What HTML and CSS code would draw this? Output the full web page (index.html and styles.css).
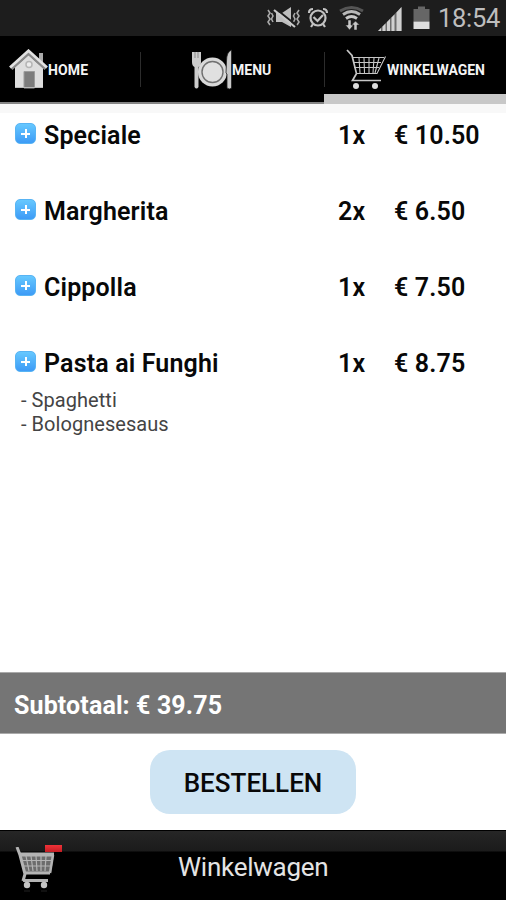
FILE: index.html
```html
<!DOCTYPE html>
<html lang="nl">
<head>
<meta charset="utf-8">
<title>Winkelwagen</title>
<link rel="stylesheet" href="styles.css">
</head>
<body>
<div class="app">
  <header class="status">
    <svg class="status-icons" width="176" height="36" viewBox="0 0 176 36" aria-hidden="true">
      <g fill="none" stroke="#a8a8a8" stroke-width="1.6">
        <path d="M12 10l2 3-2 3 2 3-2 3 2 3M15.500 13l1.500 3-1.500 3 1.500 3M43 10l-2 3 2 3-2 3 2 3-2 3M39 13l-1.500 3 1.500 3-1.500 3"/>
      </g>
      <path d="M20 13h6l9-6v20l-9-5h-6z" fill="#bdbdbd"/>
      <path d="M20 9l20 16" stroke="#1d1d1d" stroke-width="2"/>
      <path d="M18 10l21 17" stroke="#c8c8c8" stroke-width="2.200"/>
      <g fill="none" stroke="#c2c2c2" stroke-width="2.200">
        <circle cx="62" cy="18" r="7.500"/>
        <path d="M57.500 17l4 4 5.500-6M53 13c0-3 2-4 4-4M71 13c0-3-2-4-4-4M57 24l-2 3M67 24l2 3"/>
      </g>
      <g fill="none" stroke-width="2.800">
        <path d="M84 11q11.500-7 23 0" stroke="#555"/>
        <path d="M87 14.500q8.500-6 17 0" stroke="#b8b8b8"/>
        <path d="M90 18.500q5.500-4 11 0" stroke="#c8c8c8"/>
      </g>
      <path d="M92 20h3v5h2.500l-4 5-4-5h2.500zM98 30v-5h-2.500l4-4 4 4H101v5z" fill="#c8c8c8" stroke="#1d1d1d" stroke-width=".5"/>
      <path d="M122 31l23.500-24v24z" fill="#6c6c6c"/>
      <path d="M122 31l3-3v3zM126.500 31v-4.500l3-3V31zM131 31v-9l3-3v12zM135.500 31V17.500l3-3V31zM140.500 31V12.500l5-5.500v24z" fill="#d0d0d0"/>
      <path d="M157.500 9h4.500V6.500h7V9h4.500v12.500h-16z" fill="#666"/>
      <path d="M157.500 21.500h16V29h-16z" fill="#dedede"/>
    </svg>
    <time class="clock">18:54</time>
  </header>

  <nav class="tabs">
    <a class="tab tab-home">
      <svg width="39" height="42" viewBox="0 0 39 42" aria-hidden="true">
        <path d="M30 4h4v13h-4z" fill="#aaa"/>
        <path d="M6 18L19.500 6 34 19v20H6z" fill="#dedede"/>
        <path d="M2.500 20L19.500 4.500 36.500 20" fill="none" stroke="#8a8a8a" stroke-width="3"/>
        <path d="M1 18.500L19.500 1.800 38 18.500" fill="none" stroke="#e2e2e2" stroke-width="2.800"/>
        <circle cx="20" cy="15.500" r="3" fill="#ececec" stroke="#b5b5b5" stroke-width="1.500"/>
        <path d="M15 22.500h10.500V39H15z" fill="#7c7c7c" stroke="#9b9b9b"/>
        <path d="M6 38.500h28" stroke="#bbb"/>
      </svg>
      <span>HOME</span>
    </a>
    <a class="tab tab-menu">
      <svg width="42" height="42" viewBox="0 0 42 42" aria-hidden="true">
        <path d="M1 3h9v10q0 4-2.500 5v20q-2 3-4 0V18Q1 17 1 13z" fill="#ccc"/>
        <path d="M4 3v6M7 3v6" stroke="#888"/>
        <circle cx="21.500" cy="23" r="14.500" fill="#d8d8d8"/>
        <circle cx="21.500" cy="23" r="10.500" fill="#e0e0e0" stroke="#707070" stroke-width="1.400"/>
        <path d="M35.500 12q0-9 5-11v38q-2 2-4.500 0V25l-1-1z" fill="#c9c9c9" stroke="#222" stroke-width=".8"/>
      </svg>
      <span>MENU</span>
    </a>
    <a class="tab tab-cart active">
      <svg width="41" height="42" viewBox="0 0 41 42" aria-hidden="true">
        <g fill="none" stroke="#c6c6c6">
          <path d="M1 1l5 5.500 4.500 18-4 7H35" stroke-width="1.700"/>
          <path d="M6 8.500h32M7 13.500h28M8 18.500h25M10 24.500h21L39.500 7.500M13 9l1 15M18 9l.5 15M23 9v15M28 9l-1 15M33 9l-4 15" stroke-width="1.100"/>
        </g>
        <circle cx="10" cy="37" r="3" fill="#ddd"/>
        <circle cx="29" cy="37" r="3" fill="#ddd"/>
      </svg>
      <span>WINKELWAGEN</span>
    </a>
  </nav>

  <main class="list">
    <section class="item">
      <i class="plus"></i><b class="name">Speciale</b><b class="qty">1x</b><b class="price">€ 10.50</b>
    </section>
    <section class="item">
      <i class="plus"></i><b class="name">Margherita</b><b class="qty">2x</b><b class="price">€ 6.50</b>
    </section>
    <section class="item">
      <i class="plus"></i><b class="name">Cippolla</b><b class="qty">1x</b><b class="price">€ 7.50</b>
    </section>
    <section class="item">
      <i class="plus"></i><b class="name">Pasta ai Funghi</b><b class="qty">1x</b><b class="price">€ 8.75</b>
    </section>
    <div class="extras">
      <div>- Spaghetti</div>
      <div>- Bolognesesaus</div>
    </div>
  </main>

  <div class="subtotal">Subtotaal: € 39.75</div>

  <div class="order"><button class="order-button">BESTELLEN</button></div>

  <footer class="footer">
    <svg class="footer-cart" width="50" height="46" viewBox="0 0 50 46" aria-hidden="true">
      <path d="M4 7h35l-3 19H10z" fill="#6c6c6c"/>
      <g fill="none" stroke="#b4b4b4">
        <path d="M2 0l3 8 5 19-2 7M35 26H10M8 33.500h25" stroke-width="3"/>
        <path d="M4 7.500h35" stroke-width="4"/>
        <path d="M38 8L35 26" stroke-width="2.500"/>
        <path d="M11 9l3 15M16 9l2 15M21 9l1 15M26 9v15M31 9l-1 15M6 13.500h31M8 19h29" stroke-width="1.200"/>
      </g>
      <circle cx="12" cy="38" r="3.200" fill="#c4c4c4"/>
      <circle cx="29" cy="38" r="3.200" fill="#c4c4c4"/>
      <path d="M9 44h6M26 44h6" stroke="#222"/>
    </svg>
    <span class="badge"></span>
    <h1 class="title">Winkelwagen</h1>
  </footer>
</div>
</body>
</html>
```

FILE: styles.css
```css
* { box-sizing: border-box; }
body {
  margin: 0;
  background: #fff;
  font-family: Roboto, "Liberation Sans", sans-serif;
  color: #080808;
}
.app {
  width: 506px;
  height: 900px;
  display: flex;
  flex-direction: column;
  overflow: hidden;
}
svg { display: block; flex: none; }

.status {
  height: 36px;
  flex: none;
  display: flex;
  background: #1d1d1d;
  padding-left: 256px;
}
.clock {
  margin-left: 6px;
  font-size: 25.5px;
  letter-spacing: -0.3px;
  line-height: 36px;
  color: #bebebe;
  white-space: nowrap;
}

.tabs {
  height: 68px;
  flex: none;
  display: grid;
  grid-template-columns: 140px 184px 182px;
  background: #000;
  border-bottom: 2px solid #858585;
}
.tab {
  display: flex;
  align-items: flex-start;
  padding-top: 13px;
  position: relative;
  font-size: 14px;
  font-weight: 700;
  color: #f4f4f4;
}
.tab span { line-height: 42px; }
.tab-home { padding-left: 9px; }
.tab-home span { letter-spacing: 0.15px; }
.tab-menu { padding-left: 51px; }
.tab-menu span { margin-left: -1px; }
.tab-cart { padding-left: 22px; }
.tab-cart span { letter-spacing: -0.05px; }
.tab + .tab::before {
  content: "";
  position: absolute;
  left: 0;
  top: 16px;
  width: 1px;
  height: 35px;
  background: #2c2c2c;
}
.active::after {
  content: "";
  position: absolute;
  left: 0;
  right: 0;
  top: 58px;
  height: 10px;
  background: #c8c8c8;
}

.list {
  height: 568px;
  flex: none;
  border-top: 9px solid #f8f8f8;
}
.item {
  height: 76px;
  display: grid;
  grid-template-columns: 29px 294px 56px 1fr;
  padding-left: 15px;
  font-size: 25px;
  line-height: 45px;
  letter-spacing: 0.15px;
}
.item b { font-weight: 600; white-space: nowrap; }
.plus {
  width: 21px;
  height: 21px;
  margin-top: 10px;
  border-radius: 5px;
  border: 1px solid #58b4f4;
  background:
    linear-gradient(#fff, #fff) center / 9px 2px no-repeat,
    linear-gradient(#fff, #fff) center / 2px 9px no-repeat,
    linear-gradient(#66c8ff, #3d9bf6);
}
.extras {
  margin-top: -28px;
  padding-left: 21px;
  font-size: 20px;
  line-height: 23.5px;
  letter-spacing: 0.05px;
  color: #444;
}

.subtotal {
  height: 62px;
  flex: none;
  padding-left: 14px;
  background: #757575;
  border-top: 1px solid #aaa;
  border-bottom: 1px solid #aaa;
  color: #fff;
  font-size: 25px;
  font-weight: 700;
  line-height: 65px;
  letter-spacing: 0.12px;
}
.order {
  height: 96px;
  flex: none;
  padding: 16px 0 0 150px;
}
.order-button {
  width: 206px;
  height: 64px;
  padding: 2px 0 0;
  border: 0;
  border-radius: 20px;
  background: #cee4f3;
  color: #080808;
  font: 500 26px/62px Roboto, sans-serif;
}
.footer {
  height: 70px;
  flex: none;
  position: relative;
  display: flex;
  padding: 16px 0 0 15px;
  border-top: 1px solid #000;
  background: linear-gradient(#262626, #1b1b1b 20px, #000 21px);
}
.badge {
  position: absolute;
  left: 45px;
  top: 14px;
  width: 17px;
  height: 7px;
  background: linear-gradient(#f03238, #c41e24);
}
.title {
  margin: 0 0 0 113px;
  color: #e4e4e4;
  font-size: 26px;
  font-weight: 400;
  line-height: 40px;
  letter-spacing: -0.25px;
}
```
